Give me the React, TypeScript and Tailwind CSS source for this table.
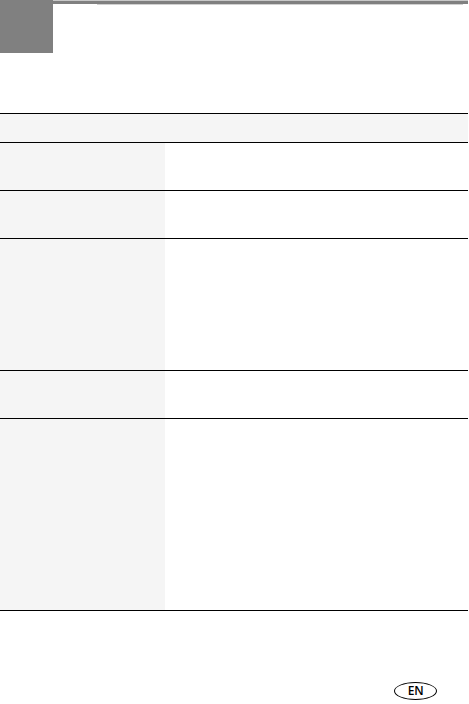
import React from 'react'

const rows = [48, 48, 132, 48, 192]

export default function App() {
  return (
    <div className="flex h-[704px] w-[469px] flex-col overflow-hidden bg-white" style={{ fontFamily: '"Open Sans", "Liberation Sans", sans-serif' }}>
      {/* header strip */}
      <div className="flex h-[53px]">
        <div className="h-[53px] w-[53px] bg-[#808080]" />
        <div className="flex w-[415px] flex-col">
          <div className="h-[1px] bg-[#c8c8c8]" />
          <div className="h-[3px] bg-[#808080]" />
          <div className="ml-[44px] mr-[5px] h-[1px] bg-[#d0d0d0]" />
        </div>
      </div>

      {/* table */}
      <div className="mt-[60px] w-[468px] border-t border-black">
        <div className="h-[29px] border-b border-black bg-[#f5f5f5]" />
        {rows.map((h, i) => (
          <div key={i} className="flex border-b border-black" style={{ height: h }}>
            <div className="w-[165px] bg-[#f5f5f5]" />
            <div className="flex-1" />
          </div>
        ))}
      </div>

      {/* language badge */}
      <div className="mt-auto mb-[4px] flex justify-end pr-[32px]">
        <div className="flex h-[18px] w-[43px] items-center justify-center rounded-[50%] border-[1.5px] border-black">
          <span className="text-[12px] font-semibold leading-none tracking-tight text-black">EN</span>
        </div>
      </div>
    </div>
  )
}
